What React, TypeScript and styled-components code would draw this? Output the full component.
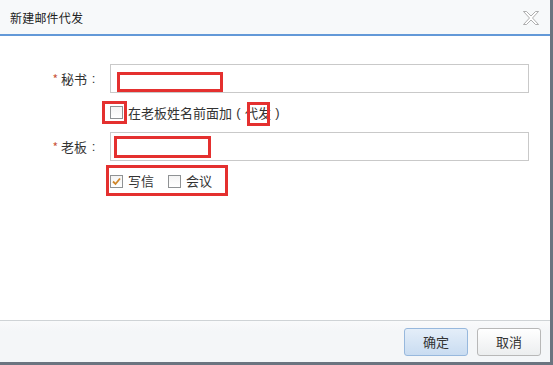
import React from "react";
import styled, { createGlobalStyle } from "styled-components";

const Global = createGlobalStyle`
  html, body { margin: 0; padding: 0; }
  body {
    background: #6b7480;
    font-family: "Noto Sans CJK SC", "Noto Sans", sans-serif;
    font-size: 13px;
    color: #333;
  }
`;

const Dialog = styled.div`
  width: 550px;
  height: 362px;
  background: #fff;
  display: flex;
  flex-direction: column;
  box-sizing: border-box;
`;

const Header = styled.div`
  height: 34px;
  flex: none;
  background: #f7f9fa;
  border-bottom: 2px solid #6399d8;
  display: flex;
  align-items: center;
  justify-content: space-between;
  padding: 0 11px 0 10px;
`;

const Title = styled.div`
  font-size: 12px;
  color: #222;
  letter-spacing: 0.2px;
`;

const CloseBtn = styled.div`
  width: 16px;
  height: 14px;
  display: flex;
  margin-top: 1px;
`;

const Body = styled.div`
  flex: 1;
  padding-top: 28px;
`;

const Form = styled.div`
  display: grid;
  grid-template-columns: 110px 419px;
  grid-template-rows: 29px 39px 29px 40px;
`;

const Label = styled.div`
  display: flex;
  align-items: center;
  justify-content: flex-end;
  padding-right: 10px;
  color: #333;
  white-space: nowrap;
`;

const Star = styled.span`
  color: #c9563c;
  font-size: 12px;
  margin-right: 3px;
`;

const Punct = styled.span`
  display: inline-block;
  width: 13px;
  text-align: center;
  font-family: "Liberation Sans", sans-serif;
`;

const Cell = styled.div`
  display: flex;
  align-items: center;
  grid-column: 2;
`;

const InputWrap = styled.div`
  position: relative;
  width: 100%;
  height: 100%;
`;

const Input = styled.input`
  width: 100%;
  height: 100%;
  box-sizing: border-box;
  border: 1px solid #c9c9c9;
  padding: 0 6px;
  margin: 0;
  outline: none;
  font: inherit;
  background: #fff;
`;

const Mark = styled.span<{ $t: number; $l: number; $r: number; $b: number }>`
  position: absolute;
  top: ${(p) => p.$t}px;
  left: ${(p) => p.$l}px;
  right: ${(p) => p.$r}px;
  bottom: ${(p) => p.$b}px;
  border: 3px solid #e4302f;
  pointer-events: none;
`;

const Rel = styled.span`
  position: relative;
  display: inline-flex;
  align-items: center;
`;

const Box = styled.span`
  width: 13px;
  height: 13px;
  box-sizing: border-box;
  border: 1px solid #8f9294;
  background: linear-gradient(#f4f4f4, #ffffff);
  display: inline-flex;
  align-items: center;
  justify-content: center;
  flex: none;
`;

const OptText = styled.span<{ $gap?: number }>`
  margin-left: ${(p) => p.$gap ?? 5}px;
  line-height: 20px;
  white-space: nowrap;
  display: inline-flex;
  align-items: center;
`;

const Spacer = styled.span`
  width: 14px;
`;

const Footer = styled.div`
  height: 41px;
  flex: none;
  border-top: 1px solid #cfd3d6;
  background: linear-gradient(#f9fafb, #f4f6f8 10px);
  display: flex;
  align-items: center;
  justify-content: flex-end;
  gap: 9px;
  padding-right: 9px;
`;

const Button = styled.button<{ $primary?: boolean }>`
  width: 64px;
  height: 28px;
  box-sizing: border-box;
  border-radius: 3px;
  font: inherit;
  font-size: 13px;
  color: #333;
  padding: 0;
  border: 1px solid ${(p) => (p.$primary ? "#97b8dd" : "#b8b8b8")};
  background: ${(p) =>
    p.$primary
      ? "linear-gradient(#e4eef9, #c9dcf1)"
      : "linear-gradient(#ffffff, #eceeef)"};
`;

const Checkbox = ({ checked }: { checked?: boolean }) => (
  <Box>
    {checked && (
      <svg width="11" height="11" viewBox="0 0 11 11">
        <path d="M2 5.5 L4.5 8 L9 2.5" fill="none" stroke="#d08628" strokeWidth="1.8" />
      </svg>
    )}
  </Box>
);

export default function App() {
  return (
    <>
      <Global />
      <Dialog>
        <Header>
          <Title>新建邮件代发</Title>
          <CloseBtn>
            <svg width="16" height="14" viewBox="0 0 16 14">
              <path
                d="M0.5 0.5 L3.5 0.5 L8 5 L12.5 0.5 L15.5 0.5 L9.5 7 L15.5 13.5 L12.5 13.5 L8 9 L3.5 13.5 L0.5 13.5 L6.5 7 Z"
                fill="#fff"
                stroke="#9a9a9a"
                strokeWidth="0.8"
              />
            </svg>
          </CloseBtn>
        </Header>
        <Body>
          <Form>
            <Label>
              <Star>*</Star>秘书<Punct>:</Punct>
            </Label>
            <Cell>
              <InputWrap>
                <Input />
                <Mark $t={8} $l={7} $r={306} $b={1} />
              </InputWrap>
            </Cell>

            <Cell>
              <Rel>
                <Checkbox />
                <Mark $t={-5} $l={-8} $r={-4} $b={-5} />
              </Rel>
              <OptText>
                在老板姓名前面加<Punct>(</Punct>
                <Rel>
                  代发
                  <Mark $t={-1} $l={2} $r={1} $b={-3} />
                </Rel>
                <Punct>)</Punct>
              </OptText>
            </Cell>

            <Label>
              <Star>*</Star>老板<Punct>:</Punct>
            </Label>
            <Cell>
              <InputWrap>
                <Input />
                <Mark $t={4} $l={4} $r={318} $b={3} />
              </InputWrap>
            </Cell>

            <Cell>
              <Rel>
                <Checkbox checked />
                <OptText>写信</OptText>
                <Spacer />
                <Checkbox />
                <OptText>会议</OptText>
                <Mark $t={-6} $l={-4} $r={-16} $b={-5} />
              </Rel>
            </Cell>
          </Form>
        </Body>
        <Footer>
          <Button $primary>确定</Button>
          <Button>取消</Button>
        </Footer>
      </Dialog>
    </>
  );
}
